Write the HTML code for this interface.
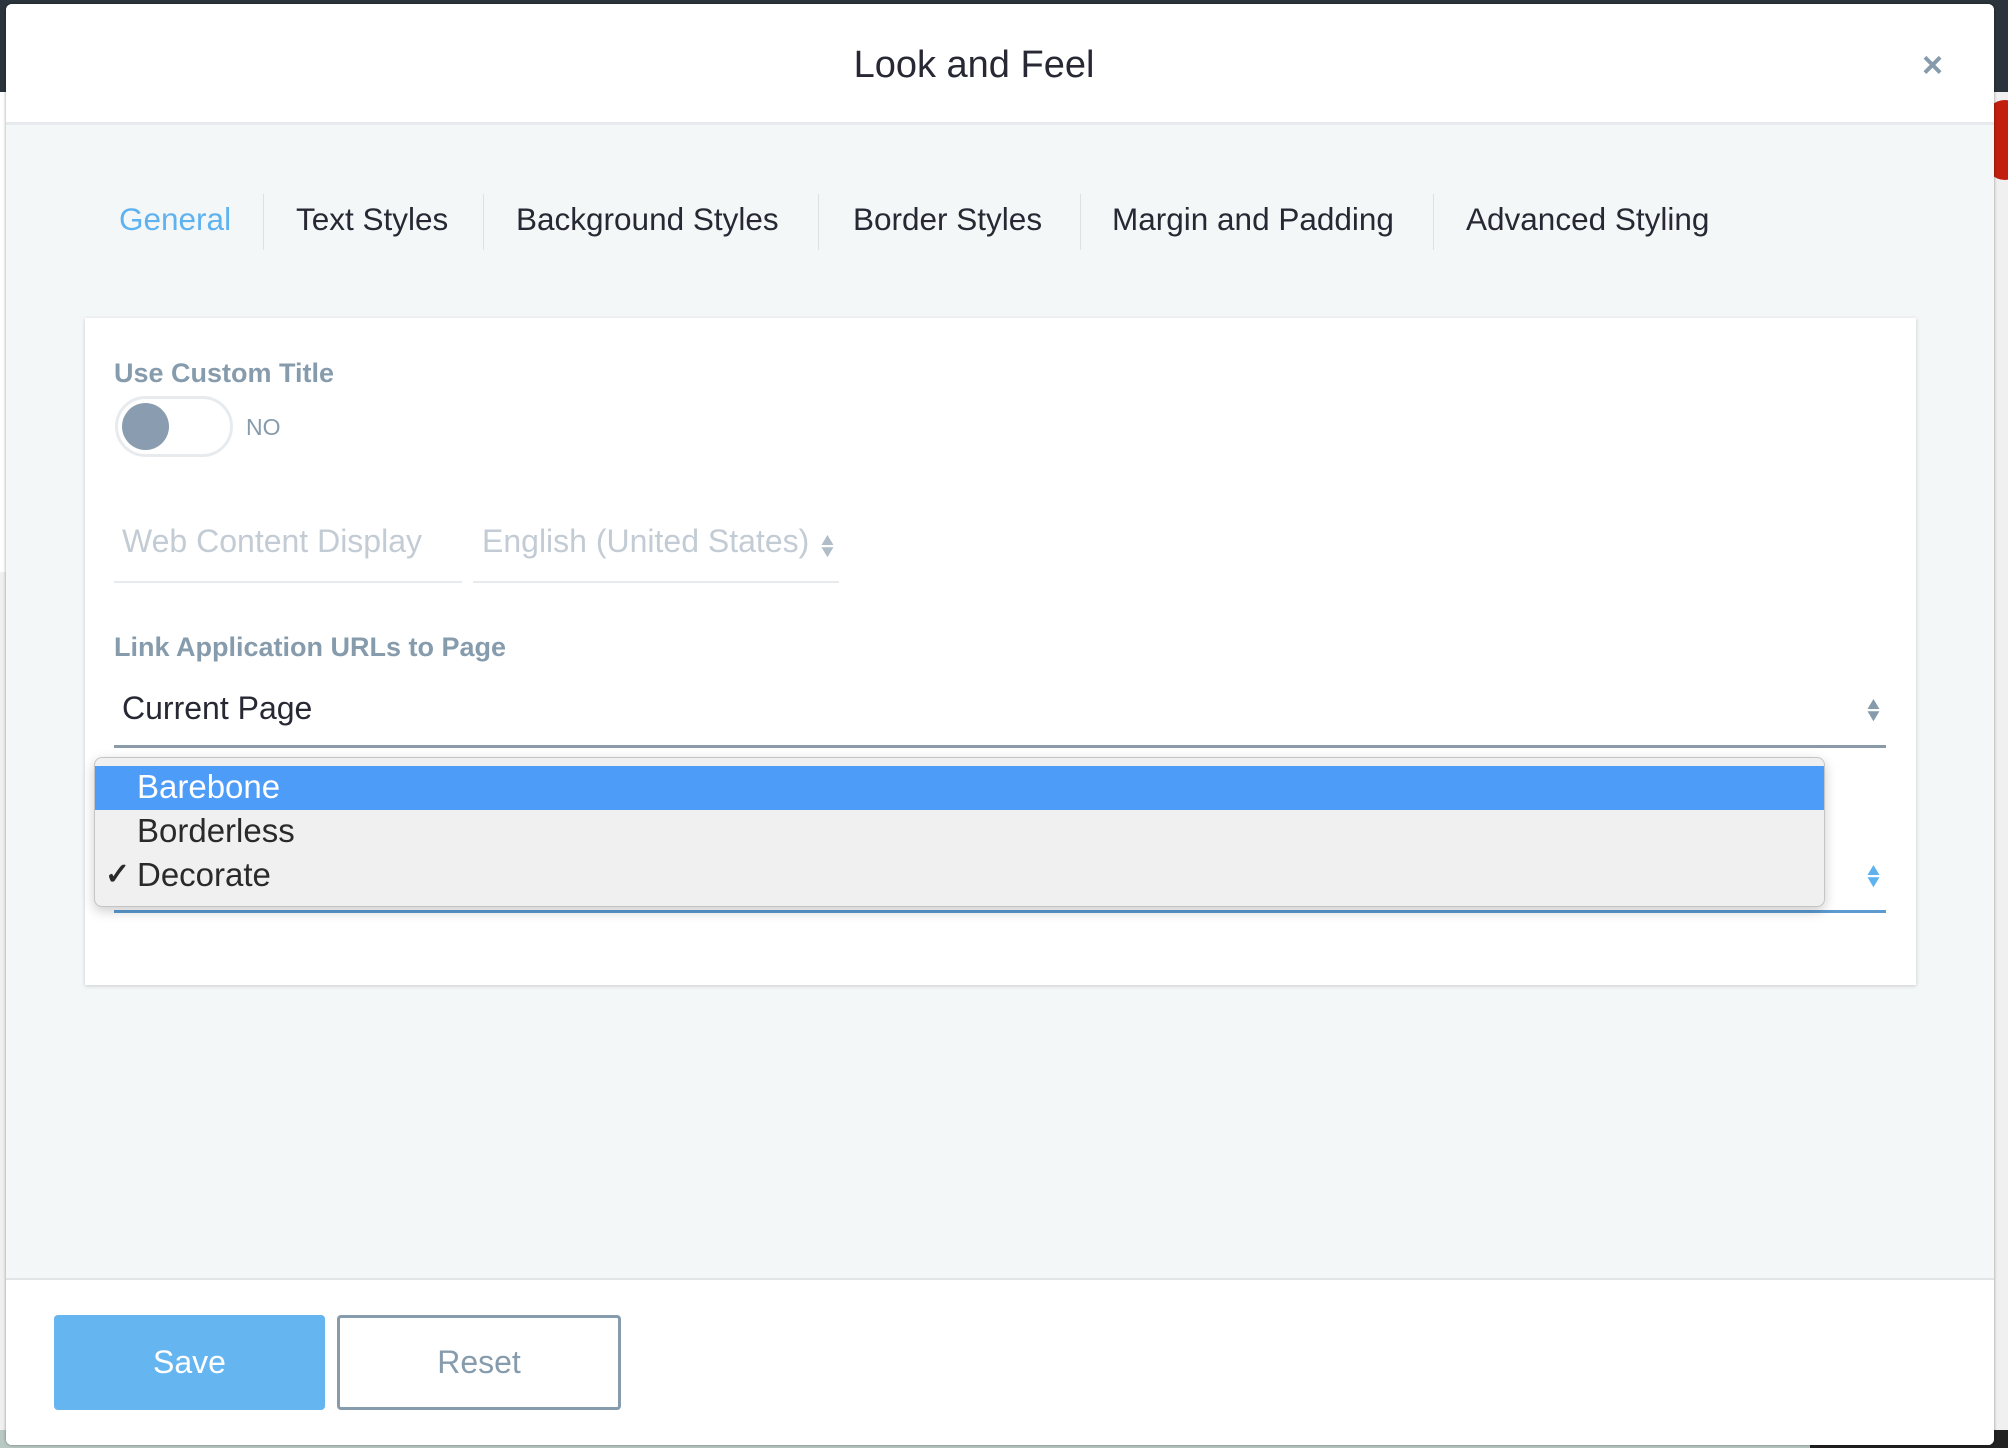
<!DOCTYPE html>
<html><head><meta charset="utf-8"><style>
*{margin:0;padding:0;box-sizing:border-box}
body{width:2008px;height:1448px;overflow:hidden;background:#f0f0f0;font-family:"Liberation Sans",sans-serif;position:relative}
.abs{position:absolute}
.arr{font-size:17px;line-height:12px;transform:scaleX(1.2)}
</style></head><body>
<div class="abs" style="left:0;top:0;width:2008px;height:92px;background:#2b343c"></div>
<div class="abs" style="left:0;top:92px;width:8px;height:480px;background:#fff"></div>
<div class="abs" style="left:1985px;top:100px;width:40px;height:80px;border-radius:40px;background:#c0200d"></div>
<div class="abs" style="left:0;top:1430px;width:2008px;height:18px;background:#b9c8c3"></div>
<div class="abs" style="left:1810px;top:1430px;width:198px;height:18px;background:#222"></div>

<div class="abs" style="left:6px;top:4px;width:1988px;height:1441px;background:#f4f7f8;border-radius:6px;overflow:hidden;box-shadow:0 0 3px rgba(0,0,0,.4)">
  <div class="abs" style="left:0;top:0;width:1988px;height:121px;background:#fff;border-bottom:3px solid #e7eaed"></div>
  <div class="abs" style="left:0;top:40px;width:1936px;text-align:center;font-size:38px;color:#272833">Look and Feel</div>
  <div class="abs" style="left:1916px;top:40px;font-size:36px;color:#869cad;font-weight:bold">×</div>

  <div class="abs" style="left:0;top:197px;height:40px;width:1988px;font-size:31.5px;color:#272833;white-space:nowrap">
    <span class="abs" style="left:113px;color:#5fb2f0">General</span>
    <span class="abs" style="left:257px;top:-7px;width:1px;height:56px;background:#dde1e5"></span>
    <span class="abs" style="left:290px">Text Styles</span>
    <span class="abs" style="left:477px;top:-7px;width:1px;height:56px;background:#dde1e5"></span>
    <span class="abs" style="left:510px">Background Styles</span>
    <span class="abs" style="left:812px;top:-7px;width:1px;height:56px;background:#dde1e5"></span>
    <span class="abs" style="left:847px">Border Styles</span>
    <span class="abs" style="left:1074px;top:-7px;width:1px;height:56px;background:#dde1e5"></span>
    <span class="abs" style="left:1106px">Margin and Padding</span>
    <span class="abs" style="left:1427px;top:-7px;width:1px;height:56px;background:#dde1e5"></span>
    <span class="abs" style="left:1460px">Advanced Styling</span>
  </div>

  <div class="abs" style="left:79px;top:314px;width:1831px;height:667px;background:#fff;box-shadow:0 1px 4px rgba(0,0,0,.18)"></div>
  <div class="abs" style="left:108px;top:354px;font-size:27px;color:#869cad;font-weight:bold">Use Custom Title</div>
  <div class="abs" style="left:109px;top:392px;width:118px;height:61px;border:3px solid #e7ebee;border-radius:31px;background:#fff"></div>
  <div class="abs" style="left:116px;top:399px;width:47px;height:47px;border-radius:50%;background:#8a9caf"></div>
  <div class="abs" style="left:240px;top:410px;font-size:23px;color:#869cad">NO</div>

  <div class="abs" style="left:108px;top:577px;width:348px;height:2px;background:#e7ebee"></div>
  <div class="abs" style="left:116px;top:519px;font-size:32px;color:#c3ccd4">Web Content Display</div>
  <div class="abs" style="left:467px;top:577px;width:366px;height:2px;background:#e7ebee"></div>
  <div class="abs" style="left:476px;top:519px;font-size:32px;color:#c3ccd4">English (United States)</div>
  <div class="abs arr" style="left:813px;top:530px;color:#b0bcc7">▲<br>▼</div>

  <div class="abs" style="left:108px;top:628px;font-size:27px;color:#869cad;font-weight:bold">Link Application URLs to Page</div>
  <div class="abs" style="left:116px;top:686px;font-size:32px;color:#272833">Current Page</div>
  <div class="abs arr" style="left:1859px;top:694px;color:#869cad">▲<br>▼</div>
  <div class="abs" style="left:108px;top:741px;width:1772px;height:3px;background:#8a9aa9"></div>

  <div class="abs" style="left:108px;top:906px;width:1772px;height:3px;background:#5b9bd0"></div>
  <div class="abs arr" style="left:1859px;top:860px;color:#5fb2f0">▲<br>▼</div>

  <div class="abs" style="left:88px;top:753px;width:1731px;height:150px;background:#f0f0f0;border:1px solid #c4c4c4;border-radius:8px;box-shadow:0 4px 12px rgba(0,0,0,.2);overflow:hidden">
    <div class="abs" style="left:0;top:8px;width:1731px;height:44px;background:#4d9cf8"></div>
    <div class="abs" style="left:42px;top:7px;font-size:33px;line-height:44px;color:#fff">Barebone</div>
    <div class="abs" style="left:42px;top:51px;font-size:33px;line-height:44px;color:#2a2a2a">Borderless</div>
    <div class="abs" style="left:10px;top:95px;font-size:30px;line-height:44px;color:#2a2a2a;font-weight:bold">✓</div>
    <div class="abs" style="left:42px;top:95px;font-size:33px;line-height:44px;color:#2a2a2a">Decorate</div>
  </div>

  <div class="abs" style="left:0;top:1274px;width:1988px;height:200px;background:#fff;border-top:2px solid #e2e5e8"></div>
  <div class="abs" style="left:48px;top:1311px;width:271px;height:95px;background:#65b5f1;border-radius:4px;color:#fff;font-size:32px;line-height:95px;text-align:center">Save</div>
  <div class="abs" style="left:331px;top:1311px;width:284px;height:95px;border:3px solid #869cad;border-radius:4px;color:#869cad;font-size:32px;line-height:89px;text-align:center;background:#fff">Reset</div>
</div>
</body></html>
